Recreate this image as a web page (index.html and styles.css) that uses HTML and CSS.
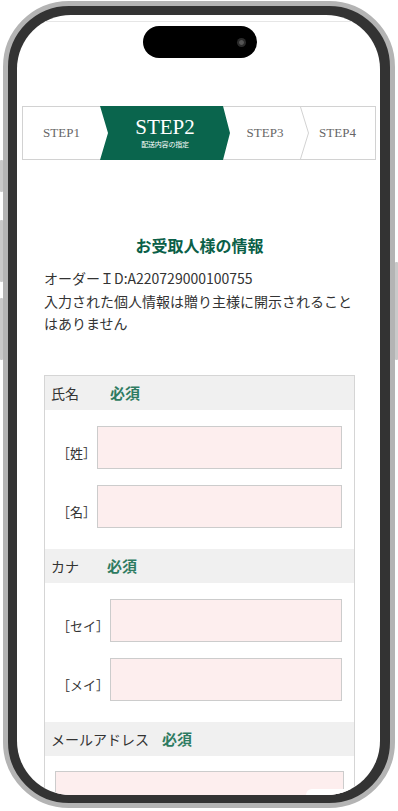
FILE: index.html
```html
<!DOCTYPE html>
<html lang="ja">
<head>
    <meta charset="UTF-8">
    <title>お受取人様の情報 | STEP2</title>
    <meta name="viewport" content="width=device-width, initial-scale=1.0">
    <link rel="stylesheet" href="styles.css">
</head>
<body>
<div class="phone">
    <!-- side buttons -->
    <span class="side-btn side-btn--mute"></span>
    <span class="side-btn side-btn--vol-up"></span>
    <span class="side-btn side-btn--vol-down"></span>
    <span class="side-btn side-btn--power"></span>

    <div class="screen">
        <div class="island"><span class="island-cam"></span></div>
        <div class="status-line"></div>

        <ol class="steps">
            <li class="step step--1">STEP1</li>
            <li class="step step--current">
                <span class="step-num">STEP2</span>
                <span class="step-sub">配送内容の指定</span>
            </li>
            <li class="step step--3">STEP3</li>
            <li class="step step--4">
                <svg class="step-sep" viewBox="0 0 9 52" preserveAspectRatio="none">
                    <polyline points="0.5,0 8.5,26 0.5,52" fill="none" stroke="#d2d2d2" stroke-width="1" vector-effect="non-scaling-stroke"/>
                </svg>
                STEP4
            </li>
        </ol>

        <main class="content">
            <h1 class="title">お受取人様の情報</h1>
            <p class="lead">オーダーＩD:A220729000100755<br>入力された個人情報は贈り主様に開示されることはありません</p>

            <div class="form-table">
                <div class="form-head">
                    <span class="form-label">氏名</span><span class="req req--name">必須</span>
                </div>
                <div class="form-body">
                    <div class="field">
                        <label class="field-label" for="sei">［姓］</label>
                        <input class="field-input" type="text" id="sei" name="sei">
                    </div>
                    <div class="field">
                        <label class="field-label" for="mei">［名］</label>
                        <input class="field-input" type="text" id="mei" name="mei">
                    </div>
                </div>

                <div class="form-head">
                    <span class="form-label">カナ</span><span class="req req--kana">必須</span>
                </div>
                <div class="form-body">
                    <div class="field">
                        <label class="field-label" for="sei-kana">［セイ］</label>
                        <input class="field-input" type="text" id="sei-kana" name="sei_kana">
                    </div>
                    <div class="field">
                        <label class="field-label" for="mei-kana">［メイ］</label>
                        <input class="field-input" type="text" id="mei-kana" name="mei_kana">
                    </div>
                </div>

                <div class="form-head">
                    <span class="form-label">メールアドレス</span><span class="req req--mail">必須</span>
                </div>
                <div class="form-body form-body--mail">
                    <input class="field-input" type="email" id="mail" name="mail">
                </div>
            </div>
        </main>

        <div class="page-top"></div>
    </div>
</div>
</body>
</html>
```

FILE: styles.css
```css
* { box-sizing: border-box; }
body { margin: 0; background: #fff; color: #333; overflow: hidden;
    font-family: "Noto Sans CJK JP", "Noto Sans", sans-serif;
}

/* phone frame */
.phone { position: relative; height: 807px; margin: 1px 3px 0; padding: 9px 10px 8px 9px;
    background: #333; border: 5px solid #b4b4b4; border-radius: 66px;
}
.side-btn { position: absolute; width: 3px; background: #c9c9c9; border-radius: 1px; }
.side-btn--mute { left: -8px; top: 154px; height: 32px; }
.side-btn--vol-up { left: -8px; top: 214px; height: 62px; }
.side-btn--vol-down { left: -8px; top: 292px; height: 62px; }
.side-btn--power { right: -8px; top: 256px; height: 98px; }

.screen { position: relative; height: 100%; background: #fff; border-radius: 54px; overflow: hidden; }
.island { position: absolute; top: 11px; left: 126px; width: 114px; height: 32px; background: #000; border-radius: 16px; z-index: 5; }
.island-cam { position: absolute; top: 12px; right: 11px; width: 9px; height: 9px; border-radius: 50%;
    background: radial-gradient(circle, #555 0 30%, #2a2a2a 45%);
}
.status-line { height: 7px; border-bottom: 1px solid #e6e6e6; }

/* steps */
.steps { display: flex; height: 54px; margin: 84px 4px 0 5px; padding: 0; list-style: none;
    border: 1px solid #d2d2d2; font-family: "Liberation Serif", "Noto Sans CJK JP", serif; font-size: 13px; color: #666;
}
.step { display: flex; align-items: center; justify-content: center; }
.step--1 { width: 77px; }
.step--current { width: 130px; margin: -1px 0; flex-direction: column; color: #fff; background: #0a654d; padding-bottom: 2px;
    clip-path: polygon(0 0, 123px 0, 130px 50%, 123px 100%, 0 100%, 8px 50%);
}
.step-num { font-size: 21px; line-height: 1; }
.step-sub { font-family: "Noto Sans CJK JP", sans-serif; font-size: 7px; line-height: 1; margin-top: 3px; letter-spacing: -0.2px; }
.step--3 { width: 70px; }
.step--4 { position: relative; flex: 1; }
.step-sep { position: absolute; left: 0; top: 0; width: 9px; height: 100%; }

/* content */
.content { margin: 0 25px 0 27px; }
.title { margin: 73px 0 0; font-size: 16px; line-height: 24px; font-weight: bold; color: #0b5f48; text-align: center; }
.lead { margin: 10px 0 0; font-size: 14px; line-height: 22.5px; color: #333; }

.form-table { margin-top: 40px; border: 1px solid #d5d5d5; }
.form-head { display: flex; align-items: center; height: 34px; padding-left: 6px; background: #f0f0f0; }
.form-label { font-size: 14px; color: #333; }
.req { font-size: 15px; font-weight: bold; color: #2e7b61; }
.req--name { margin-left: 31px; }
.req--kana { margin-left: 28px; }
.req--mail { margin-left: 13px; }

.form-body { display: flex; flex-direction: column; gap: 16px; padding: 16px 12px 21px; }
.form-body--mail { padding: 15px 10px 20px; }
.field { display: flex; align-items: center; }
.field-label { margin-top: 10px; margin-left: 0; font-size: 13px; color: #333; white-space: nowrap; }
.field-input { flex: 1; height: 43px; min-width: 0; margin-left: 1px; background: #fdeeee; border: 1px solid #ccc; border-radius: 0; font-size: 14px; }
.form-body--mail .field-input { flex: none; width: 100%; margin: 0; }

.page-top { position: absolute; right: 27px; bottom: 0; width: 47px; height: 6px; background: #fff; border-radius: 6px 0 0 0; }
```
